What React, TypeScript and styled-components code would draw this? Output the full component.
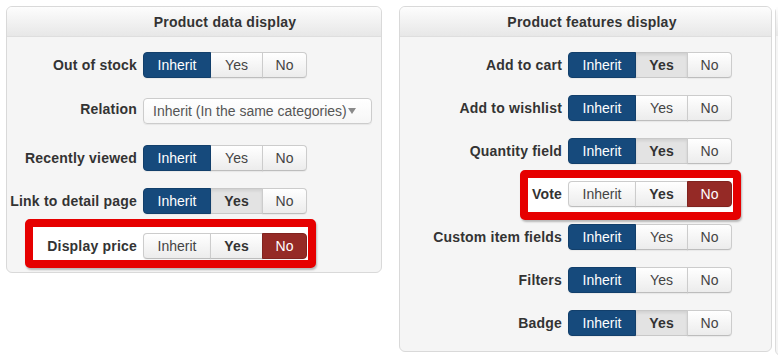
import React from 'react';
import styled, { createGlobalStyle, css } from 'styled-components';

const Global = createGlobalStyle`
  html, body {
    margin: 0;
    padding: 0;
    background: #ffffff;
    overflow: hidden;
  }
  body {
    font-family: "Liberation Sans", Arial, sans-serif;
    font-size: 14px;
    color: #333333;
  }
`;

const Page = styled.div`
  display: flex;
  align-items: flex-start;
  width: 778px;
  height: 360px;
  padding: 6px 0 0 6px;
  box-sizing: border-box;
  overflow: hidden;
`;

const Panel = styled.section<{ $w: number; $ml?: number }>`
  flex: 0 0 ${(p) => p.$w}px;
  margin-left: ${(p) => p.$ml ?? 0}px;
  box-sizing: border-box;
  background: #f5f5f5;
  border: 1px solid #d9d9d9;
  border-radius: 6px;
  overflow: hidden;
`;

const Header = styled.div<{ $pl: number }>`
  height: 29px;
  display: flex;
  align-items: center;
  justify-content: center;
  padding-left: ${(p) => p.$pl}px;
  background: linear-gradient(#fdfdfd, #e7e7e7);
  border-bottom: 1px solid #dedede;
  font-weight: bold;
  font-size: 14px;
  color: #333333;
  letter-spacing: 0.25px;
`;

const Body = styled.div<{ $pb: number }>`
  display: flex;
  flex-direction: column;
  padding: 15px 0 ${(p) => p.$pb}px;
`;

const Row = styled.div<{ $mt?: number }>`
  display: flex;
  align-items: center;
  gap: 6px;
  margin-top: ${(p) => p.$mt ?? 0}px;
  height: 26px;
`;

const Label = styled.label<{ $w: number; $up?: number }>`
  flex: 0 0 ${(p) => p.$w}px;
  text-align: right;
  font-weight: bold;
  font-size: 14px;
  letter-spacing: 0.2px;
  color: #333333;
  white-space: nowrap;
  margin-bottom: ${(p) => p.$up ?? 0}px;
`;

// Red annotation frame drawn around a row
const Highlight = styled.div<{ $mt: number; $ml: number; $pt: number; $pb: number }>`
  align-self: flex-start;
  margin: ${(p) => p.$mt}px 0 0 ${(p) => p.$ml}px;
  padding: ${(p) => p.$pt}px 1px ${(p) => p.$pb}px 0;
  background: #ffffff;
  border: 8px solid #e60000;
  border-radius: 5px;
  box-shadow: 1px 2px 2px rgba(0, 0, 0, 0.25);
`;

const Group = styled.div`
  display: flex;
  height: 26px;
`;

type Kind = 'plain' | 'primary' | 'danger' | 'pressed' | 'bold';

const Seg = styled.button<{ $kind: Kind; $w: number }>`
  width: ${(p) => p.$w}px;
  height: 26px;
  box-sizing: border-box;
  margin: 0;
  margin-left: -1px;
  padding: 0;
  font-family: "Liberation Sans", Arial, sans-serif;
  font-size: 14px;
  line-height: 24px;
  color: #444444;
  background: linear-gradient(#ffffff, #ececec);
  border: 1px solid #cccccc;
  border-bottom-color: #bdbdbd;
  box-shadow: 0 1px 1px rgba(0, 0, 0, 0.05);

  &:first-child {
    margin-left: 0;
    border-radius: 4px 0 0 4px;
  }
  &:last-child {
    border-radius: 0 4px 4px 0;
  }

  ${(p) =>
    p.$kind === 'primary' &&
    css`
      position: relative;
      z-index: 1;
      background: #164a7c;
      border-color: #123f6b;
      color: #ffffff;
    `}
  ${(p) =>
    p.$kind === 'danger' &&
    css`
      position: relative;
      z-index: 1;
      background: #952a26;
      border-color: #80231f;
      color: #ffffff;
    `}
  ${(p) =>
    p.$kind === 'pressed' &&
    css`
      background: #e3e3e3;
      border-color: #c8c8c8;
      box-shadow: inset 0 2px 3px rgba(0, 0, 0, 0.08);
      font-weight: bold;
      letter-spacing: 0.2px;
      color: #333333;
    `}
  ${(p) =>
    p.$kind === 'bold' &&
    css`
      font-weight: bold;
      letter-spacing: 0.2px;
      color: #333333;
    `}
`;

const Select = styled.div`
  width: 229px;
  height: 26px;
  box-sizing: border-box;
  display: flex;
  align-items: center;
  padding: 0 0 0 9px;
  background: linear-gradient(#ffffff, #f6f6f6);
  border: 1px solid #cccccc;
  border-radius: 4px;
  box-shadow: 0 1px 1px rgba(0, 0, 0, 0.06);
  font-size: 14px;
  color: #555555;
  white-space: nowrap;
`;

const Caret = styled.span`
  margin-left: 1px;
  width: 0;
  height: 0;
  border-left: 4px solid transparent;
  border-right: 4px solid transparent;
  border-top: 6px solid #8a8a8a;
`;

type Choice = 'inherit' | 'yes' | 'no';
interface ToggleProps {
  value: Choice;
  yesBold?: boolean;
}

const widths = { inherit: 68, yes: 53, no: 45 };

const Toggle: React.FC<ToggleProps> = ({ value, yesBold }) => {
  const yesKind: Kind = yesBold ? (value === 'inherit' ? 'pressed' : 'bold') : 'plain';
  return (
    <Group>
      <Seg $w={widths.inherit} $kind={value === 'inherit' ? 'primary' : 'plain'}>
        Inherit
      </Seg>
      <Seg $w={widths.yes} $kind={yesKind}>
        Yes
      </Seg>
      <Seg $w={widths.no} $kind={value === 'no' ? 'danger' : 'plain'}>
        No
      </Seg>
    </Group>
  );
};

const Edge = styled.div`
  flex: 0 0 20px;
  margin-left: 3px;
  height: 350px;
  box-sizing: border-box;
  border: 1px solid #dcdcdc;
  border-radius: 6px 0 0 6px;
  background: #f5f5f5;
`;

const EdgeHead = styled.div`
  height: 29px;
  background: linear-gradient(#fdfdfd, #e7e7e7);
`;

const App: React.FC = () => (
  <>
    <Global />
    <Page>
      <Panel $w={376}>
        <Header $pl={62}>Product data display</Header>
        <Body $pb={4}>
          <Row>
            <Label $w={130}>Out of stock</Label>
            <Toggle value="inherit" />
          </Row>
          <Row $mt={20}>
            <Label $w={130} $up={5}>Relation</Label>
            <Select>
              Inherit (In the same categories)
              <Caret />
            </Select>
          </Row>
          <Row $mt={21}>
            <Label $w={130}>Recently viewed</Label>
            <Toggle value="inherit" />
          </Row>
          <Row $mt={17}>
            <Label $w={130}>Link to detail page</Label>
            <Toggle value="inherit" yesBold />
          </Row>
          <Highlight $mt={5} $ml={18} $pt={6} $pb={1}>
            <Row>
              <Label $w={104}>Display price</Label>
              <Toggle value="no" yesBold />
            </Row>
          </Highlight>
        </Body>
      </Panel>

      <Panel $w={373} $ml={17}>
        <Header $pl={13}>Product features display</Header>
        <Body $pb={15}>
          <Row>
            <Label $w={162}>Add to cart</Label>
            <Toggle value="inherit" yesBold />
          </Row>
          <Row $mt={17}>
            <Label $w={162}>Add to wishlist</Label>
            <Toggle value="inherit" />
          </Row>
          <Row $mt={17}>
            <Label $w={162}>Quantity field</Label>
            <Toggle value="inherit" yesBold />
          </Row>
          <Highlight $mt={6} $ml={120} $pt={3} $pb={5}>
            <Row>
              <Label $w={34}>Vote</Label>
              <Toggle value="no" yesBold />
            </Row>
          </Highlight>
          <Row $mt={4}>
            <Label $w={162}>Custom item fields</Label>
            <Toggle value="inherit" />
          </Row>
          <Row $mt={17}>
            <Label $w={162}>Filters</Label>
            <Toggle value="inherit" />
          </Row>
          <Row $mt={17}>
            <Label $w={162}>Badge</Label>
            <Toggle value="inherit" yesBold />
          </Row>
        </Body>
      </Panel>

      <Edge>
        <EdgeHead />
      </Edge>
    </Page>
  </>
);

export default App;
